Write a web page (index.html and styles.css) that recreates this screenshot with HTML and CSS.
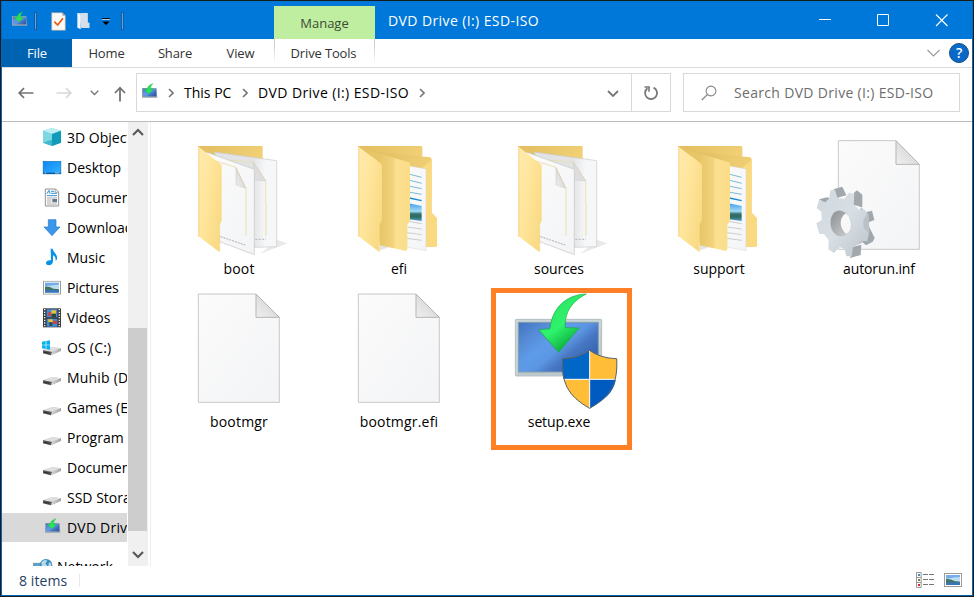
FILE: index.html
```html
<!DOCTYPE html>
<html lang="en">
<head>
<meta charset="utf-8">
<title>DVD Drive (I:) ESD-ISO</title>
<link rel="stylesheet" href="styles.css">
</head>
<body>
<svg class="defs" width="0" height="0" aria-hidden="true">
  <defs>
    <linearGradient id="gBack" x1="0" y1="0" x2="1" y2="1"><stop offset="0" stop-color="#e3bd5f"/><stop offset="1" stop-color="#fbdf88"/></linearGradient>
    <linearGradient id="gFront" x1="0" y1="0" x2="1" y2="0.6"><stop offset="0" stop-color="#ffebb0"/><stop offset="0.5" stop-color="#ffe59b"/><stop offset="1" stop-color="#f9db85"/></linearGradient>
    <linearGradient id="gMid" x1="0" y1="0" x2="1" y2="0"><stop offset="0.25" stop-color="#e7c668"/><stop offset="0.6" stop-color="#f2d47b"/><stop offset="0.64" stop-color="#fbe092"/><stop offset="1" stop-color="#fbdd87"/></linearGradient>
    <linearGradient id="gPaper" x1="0" y1="0" x2="1" y2="1"><stop offset="0" stop-color="#fbfbfb"/><stop offset="1" stop-color="#f3f4f6"/></linearGradient>
    <linearGradient id="gPaper2" x1="0" y1="0" x2="1" y2="0"><stop offset="0.62" stop-color="#e1e3e4"/><stop offset="0.82" stop-color="#f6f7f8"/></linearGradient>
    <linearGradient id="gFold" x1="0" y1="1" x2="1" y2="0"><stop offset="0" stop-color="#f0f0f0"/><stop offset="0.5" stop-color="#dedede"/><stop offset="1" stop-color="#d0d0d0"/></linearGradient>
    <linearGradient id="gPhoto" x1="0" y1="0" x2="0" y2="1"><stop offset="0" stop-color="#3f9ce8"/><stop offset="0.45" stop-color="#a5dcf7"/><stop offset="0.6" stop-color="#356f70"/><stop offset="0.78" stop-color="#2d6d62"/><stop offset="1" stop-color="#4f9fd0"/></linearGradient>
    <linearGradient id="gScreen" x1="0" y1="0" x2="1" y2="0.75"><stop offset="0" stop-color="#3f72c0"/><stop offset="0.2" stop-color="#5488d3"/><stop offset="0.42" stop-color="#5d9be8"/><stop offset="0.58" stop-color="#5c96e3"/><stop offset="0.72" stop-color="#4777c3"/><stop offset="1" stop-color="#315da6"/></linearGradient>
    <linearGradient id="gArrow" x1="0" y1="0" x2="0.6" y2="1"><stop offset="0" stop-color="#0a9e31"/><stop offset="0.3" stop-color="#2be866"/><stop offset="0.6" stop-color="#2ff36c"/><stop offset="1" stop-color="#07a336"/></linearGradient>
    <linearGradient id="gGear" x1="0" y1="0" x2="1" y2="1"><stop offset="0" stop-color="#d0d7dd"/><stop offset="0.5" stop-color="#d8dfe4"/><stop offset="1" stop-color="#bcc5cc"/></linearGradient>
    <linearGradient id="gHole" x1="0" y1="0" x2="1" y2="1"><stop offset="0" stop-color="#8b8f92"/><stop offset="1" stop-color="#d0d3d5"/></linearGradient>
    <linearGradient id="gDesk" x1="0" y1="0" x2="1" y2="1"><stop offset="0" stop-color="#1185f5"/><stop offset="1" stop-color="#31b4ff"/></linearGradient>
    <linearGradient id="gDrive" x1="0" y1="0" x2="1" y2="0"><stop offset="0" stop-color="#d9d9da"/><stop offset="1" stop-color="#a3a3a5"/></linearGradient>

    <symbol id="folder-papers" viewBox="-3 24 360 360">
      <path d="M240 372L322 340L292 330Z" fill="#e9e9e9"/>
      <path d="M54 48H245Q248 48 248 52V200H54Z" fill="url(#gBack)"/>
      <path d="M102 66L290 92V350L225 352Z" fill="url(#gPaper2)" stroke="#c9c9c9" stroke-width="2"/>
      <path d="M140 90L220 97L257 153V222" fill="none" stroke="#eddfb4" stroke-width="3"/>
      <path d="M258 222V318" stroke="#efe3bb" stroke-width="4"/>
      <path d="M220 97L257 153L222 149Z" fill="#dedede" stroke="#b9b9b9"/>
      <path d="M226 328H258" stroke="#999" stroke-width="2" stroke-dasharray="6 4"/>
      <path d="M78 66L223 118V374L119 335Z" fill="url(#gPaper)" stroke="#c4c4c4" stroke-width="2"/>
      <path d="M110 94L168 112L198 175V318" fill="none" stroke="#eddfb4" stroke-width="3"/>
      <path d="M168 114L197 175L168 164Z" fill="url(#gFold)" stroke="#b4b4b4"/>
      <path d="M122 320L198 346" stroke="#888" stroke-width="2" stroke-dasharray="6 3"/>
      <path d="M54 49L125 105V272L119 285V367L54 318Z" fill="url(#gFront)"/>
      <path d="M57 53V319M119 286V365" stroke="#edcf7d" stroke-width="2" opacity=".7"/>
    </symbol>

    <symbol id="folder-docs" viewBox="-3 24 360 360">
      <path d="M119 362L145 352L119 342Z" fill="#e4e4e4"/>
      <path d="M54 48H243Q247 48 247 52V200H54Z" fill="url(#gBack)"/>
      <path d="M88 62L270 82Q275 83 275 88V248L291 265V346Q291 351 286 351H240L100 300Z" fill="url(#gBack)"/>
      <path d="M250 110L275 90V248L291 265V346Q291 351 286 351H252Z" fill="#fada80"/>
      <path d="M195 106L255 116Q258 117 258 121V362L195 350Z" fill="url(#gPaper)" stroke="#d5d5d5" stroke-width="1.5"/>
      <path d="M210 133L245 142M210 151L245 160M210 169L245 176M210 187L245 193" stroke="#7bbbdc" stroke-width="3"/>
      <path d="M208 204L245 212" stroke="#188bd4" stroke-width="4"/>
      <path d="M206 220L245 228V273L206 268Z" fill="url(#gPhoto)"/>
      <path d="M206 274L245 281M202 291L245 297M200 308L245 314M200 325L245 331" stroke="#b7b7b7" stroke-width="2"/>
      <path d="M88 62L207 97Q210 98 210 103V272L202 284V356Q202 363 196 362L119 346Z" fill="url(#gMid)"/>
      <path d="M54 49L122 100Q126 104 126 110V270L119 285V367L54 318Z" fill="url(#gFront)"/>
      <path d="M57 53V319" stroke="#edcf7d" stroke-width="2" opacity=".7"/>
    </symbol>

    <symbol id="page" viewBox="-3 18 360 360">
      <path d="M55 27H227L298 97V352H55Z" fill="url(#gPaper)" stroke="#c6c8c9" stroke-width="3"/>
      <path d="M228 27L298 97H228Z" fill="url(#gFold)" stroke="#b5b5b5" stroke-width="3"/>
    </symbol>

    <symbol id="page-gear" viewBox="57 24 360 360" overflow="visible">
      <path d="M115 32H287L358 103V358H115Z" fill="url(#gPaper)" stroke="#c6c8c9" stroke-width="3"/>
      <path d="M288 32L358 103H288Z" fill="url(#gFold)" stroke="#b5b5b5" stroke-width="3"/>
      <path d="M57 208L82 202L92 206L76 220ZM102 177L127 170L139 196L111 203L88 199ZM162 188L171 181L187 194V232L160 224ZM190 248L216 242L223 270L194 281ZM184 292L206 288L224 324L218 335L198 346L180 330ZM158 351L184 344L182 375L150 384Z" fill="#a1a8ad"/>
      <path d="M182 232L206 252L208 305L184 340L168 345Z" fill="#bbc1c6"/>
      <path fill-rule="evenodd" fill="url(#gGear)" d="M91 181L105 179L112 203L133 207L147 188L163 192L160 222L177 239L195 240L201 250L190 272L191 295L207 309L202 334L182 332L168 348L158 351L156 379L139 379L134 357L119 351L102 369L85 358L86 331L72 312H58L49 280L65 270L64 245L50 235L57 210L76 217L88 205ZM123 242C88 239 82 304 114 316C160 332 167 253 123 242Z"/>
      <path fill-rule="evenodd" fill="url(#gHole)" d="M123 242C83 237 82 310 116 318C163 329 166 249 123 242ZM137 250C159 264 160 299 139 312C119 295 115 267 137 250Z"/>
    </symbol>

    <symbol id="installer" viewBox="57 33 360 360">
      <rect x="106" y="118" width="259" height="170" rx="3" fill="#cbd6da" stroke="#9eabb0" stroke-width="2"/>
      <path d="M108 286L117 276H355L363 120V286Z" fill="#acbabf" opacity=".5"/>
      <rect x="115" y="127" width="240" height="149" fill="url(#gScreen)" stroke="#879dab" stroke-width="3"/>
      <path d="M319 42C273 43 218 70 210 146L176 149L236 217L297 144L256 143C253 94 279 62 319 42Z" fill="url(#gArrow)" stroke="#16a840" stroke-width="2"/>
      <path d="M329 211C348 225 375 235 410 236C414 307 395 347 329 385C262 347 244 307 248 236C283 235 310 225 329 211Z" fill="#ffbd38"/>
      <path d="M329 211V298H250C247 280 247 260 248 236C283 235 310 225 329 211Z" fill="#0067c7"/>
      <path d="M329 298H408C401 338 373 361 329 385Z" fill="#005bc0"/>
      <path d="M329 213V384M249 298H409" stroke="#fff" stroke-width="3"/>
      <path d="M329 211C348 225 375 235 410 236C414 307 395 347 329 385C262 347 244 307 248 236C283 235 310 225 329 211Z" fill="none" stroke="#57616a" stroke-width="3"/>
    </symbol>

    <symbol id="dvd" viewBox="33 32 51 48">
      <path d="M36 47H79L82 76H36Z" fill="#93a2ac"/>
      <rect x="39" y="49" width="40" height="23" fill="url(#gScreen)"/>
      <path d="M69 34C57 37 52 44 52 51H43L57 65L70 51H62C61 43 65 38 69 34Z" fill="#27e553" stroke="#0cae36"/>
    </symbol>

    <symbol id="drive" viewBox="0 0 60 60">
      <path d="M3 37L31 28L57 31V38L27 52L3 46Z" fill="#aeaeb0"/>
      <path d="M3 37L31 27L57 31L30 42Z" fill="#dededf"/>
      <path d="M3 37L30 42L27 52L3 46Z" fill="#555859"/>
      <path d="M6 41L22 44V47L6 44Z" fill="#272f2b"/>
      <path d="M30 42L57 31V38L27 52Z" fill="url(#gDrive)"/>
    </symbol>

    <symbol id="photo" viewBox="0 0 54 42">
      <rect x="1.5" y="1.5" width="51" height="39" fill="#fff" stroke="#9b9b9b" stroke-width="3"/>
      <rect x="6" y="6" width="42" height="30" fill="#b9dcf3"/>
      <path d="M6 6H48V12Q30 12 6 17Z" fill="#76ace8"/>
      <path d="M6 18Q20 17 31 24L48 26V30H6Z" fill="#427461"/>
      <path d="M6 28H48V36H6Z" fill="#3976b8"/>
    </symbol>
    <symbol id="chev" viewBox="0 0 12 8"><path d="M1 1L6 6L11 1" fill="none" stroke="currentColor" stroke-width="1.8"/></symbol>
    <symbol id="chev-right" viewBox="0 0 6 10"><path d="M1 1L5 5L1 9" fill="none" stroke="#777" stroke-width="1.6"/></symbol>
  </defs>
</svg>

<div class="window">
  <header class="titlebar">
    <div class="quick">
      <svg class="q-app" width="17" height="16"><use href="#dvd"/></svg>
      <span class="q-sep"></span>
      <svg class="q-check" width="15" height="19" viewBox="0 0 45 57"><path d="M2 2H34L43 11V55H2Z" fill="#fafafa" stroke="#a5a09b" stroke-width="2"/><path d="M34 2V11H43Z" fill="#aaa"/><path d="M10 29L20 39L36 19" fill="none" stroke="#e8590c" stroke-width="5"/></svg>
      <svg class="q-folder" width="13" height="18" viewBox="0 0 39 54"><path d="M3 3H32V32H37V48H14Z" fill="#c3cfe0"/><path d="M1 2L11 8V52L1 47Z" fill="#f2f5fa"/><path d="M11 8L14 3H32V32H37V47H11Z" fill="#d5deeb"/></svg>
      <svg class="q-caret" width="8" height="8" viewBox="0 0 8 8"><path d="M0 .5H8" stroke="#111"/><path d="M0 1.5H8" stroke="#9cc9f0"/><path d="M.5 3.5H7.5L4 7.2Z" fill="#000"/></svg>
      <span class="q-sep last"></span>
    </div>
    <div class="context">Manage</div>
    <div class="title">DVD Drive (I:) ESD-ISO</div>
    <div class="controls">
      <svg viewBox="0 0 58 38"><path d="M23 18.5H35" stroke="#fff"/></svg>
      <svg viewBox="0 0 58 38"><path d="M23.5 13.5H34.5V24.5H23.5Z" fill="none" stroke="#fff"/></svg>
      <svg viewBox="0 0 58 38"><path d="M24 13.5L35.5 25M35.5 13.5L24 25" stroke="#fff" stroke-width="1.1"/></svg>
    </div>
  </header>

  <nav class="ribbon">
    <span class="tab file">File</span>
    <span class="tab home">Home</span>
    <span class="tab share">Share</span>
    <span class="tab view">View</span>
    <span class="tab tools">Drive Tools</span>
    <span class="ribbon-end">
      <svg width="13" height="8" viewBox="0 0 13 8"><path d="M.5 1L6.5 7L12.5 1" fill="none" stroke="#999" stroke-width="1.1"/></svg>
      <span class="help">?</span>
    </span>
  </nav>

  <div class="navrow">
    <div class="arrows">
      <svg width="16" height="12" viewBox="0 0 16 12"><path d="M15.5 6H1.5M6 1.2L1.2 6L6 10.8" fill="none" stroke="#737373" stroke-width="1.7"/></svg>
      <svg class="fwd" width="16" height="12" viewBox="0 0 16 12"><path d="M.5 6H14.5M10 1.2L14.8 6L10 10.8" fill="none" stroke="#d8d8d8" stroke-width="1.7"/></svg>
      <svg class="hist" width="9" height="6"><use href="#chev"/></svg>
      <svg class="up" width="12" height="16" viewBox="0 0 12 16"><path d="M6 15.5V1.5M1 7L6 1.7L11 7" fill="none" stroke="#737373" stroke-width="1.8"/></svg>
    </div>
    <div class="address">
      <svg class="a-icon" width="17" height="16"><use href="#dvd"/></svg>
      <svg class="a-chev" width="6" height="10"><use href="#chev-right"/></svg>
      <span class="crumb pc">This PC</span>
      <svg class="a-chev" width="6" height="10"><use href="#chev-right"/></svg>
      <span class="crumb disc">DVD Drive (I:) ESD-ISO</span>
      <svg class="a-chev" width="6" height="10"><use href="#chev-right"/></svg>
      <svg class="a-drop" width="12" height="8"><use href="#chev"/></svg>
      <span class="refresh"><svg width="16" height="16" viewBox="0 0 16 16"><path d="M10.6 2.6A6 6 0 1 1 4.5 3.2" fill="none" stroke="#777" stroke-width="1.8"/><path d="M1.5 2H6V6.7" fill="none" stroke="#777" stroke-width="1.6"/></svg></span>
    </div>
    <div class="search">
      <svg width="16" height="16" viewBox="0 0 16 16"><circle cx="10" cy="6" r="4.9" fill="none" stroke="#858585" stroke-width="1.1"/><path d="M6.5 9.5L.8 15" stroke="#858585" stroke-width="1.2"/></svg>
      <span>Search DVD Drive (I:) ESD-ISO</span>
    </div>
  </div>

  <main class="content">
    <aside class="tree">
      <div class="node"><svg width="20" height="20" viewBox="126 24 60 60"><path d="M129 32L156 24L183 32V68L156 78L129 68Z" fill="#64cbd9"/><path d="M129 32L156 24L183 32L156 42Z" fill="#bdeff3"/><path d="M156 42L183 32V68L156 78Z" fill="#119bbb"/><path d="M129 32L156 42V60L129 68Z" fill="#7bd7e2"/><path d="M129 68L156 59V78Z" fill="#42b8cd"/></svg><span>3D Objects</span></div>
      <div class="node"><svg width="20" height="20" viewBox="126 113 60 60"><rect x="129.5" y="123.500" width="53" height="37" fill="url(#gDesk)" stroke="#0670b9" stroke-width="2"/><path d="M130 159H182" stroke="#045695" stroke-width="4"/><path d="M134 158H139M165 158H178" stroke="#fff" stroke-width="2"/></svg><span>Desktop</span></div>
      <div class="node"><svg width="20" height="20" viewBox="126 203 60 60"><path d="M136 206H167L176 215V257H136Z" fill="#fbfbfb" stroke="#929292" stroke-width="3"/><path d="M166 206V216H176" fill="none" stroke="#929292" stroke-width="2"/><path d="M141 220L147 210L150 220M153 213H163M153 219H171M141 226H171" fill="none" stroke="#3493d6" stroke-width="3"/><path d="M141 233H171M141 239H154M141 245H154M141 251H171" stroke="#888" stroke-width="2"/><rect x="157" y="236" width="14" height="10" fill="#61798a"/></svg><span>Documents</span></div>
      <div class="node"><svg width="20" height="20" viewBox="126 293 60 60"><path d="M145 298H168V320H180L156 346L132 320H145Z" fill="#3a97e9" stroke="#2676c5" stroke-width="2"/></svg><span>Downloads</span></div>
      <div class="node"><svg width="20" height="20" viewBox="126 383 60 60"><path d="M152 385H158C159 396 173 400 171 417L167 422C168 411 163 407 159 405V423C159 437 138 438 138 428C138 421 146 418 153 420Z" fill="#0993e6"/></svg><span>Music</span></div>
      <div class="node"><svg width="20" height="20" viewBox="-3 -8 60 60"><use href="#photo" width="54" height="42"/></svg><span class="tight">Pictures</span></div>
      <div class="node"><svg width="20" height="20" viewBox="126 560 60 60"><rect x="129" y="561" width="54" height="57" fill="#3d3b3c"/><path d="M134 563V618M178 563V618" stroke="#eee" stroke-width="4" stroke-dasharray="4 4"/><path d="M140 564H172V588H140ZM140 592H172V616H140Z" fill="#4289d8"/><path d="M145 573H154V584H145ZM159 598H170V608H159Z" fill="#d83e3b"/><path d="M154 567H168V577H154ZM145 594H158V602H145Z" fill="#edc332"/><path d="M155 577H168V588H155ZM148 603H157V613H148Z" fill="#284a3c"/></svg><span>Videos</span></div>
      <div class="node"><svg width="20" height="20" viewBox="0 0 60 60"><use href="#drive" width="60" height="60"/><path d="M0 11L11 9V20H0ZM13 9L24 7V20H13ZM0 22H11V33L0 31ZM13 22H24V35L13 33Z" fill="#05b2ee"/></svg><span class="wide">OS (C:)</span></div>
      <div class="node"><svg width="20" height="20"><use href="#drive"/></svg><span class="wide">Muhib (D:)</span></div>
      <div class="node"><svg width="20" height="20"><use href="#drive"/></svg><span>Games (E:)</span></div>
      <div class="node"><svg width="20" height="20"><use href="#drive"/></svg><span>Program Files</span></div>
      <div class="node"><svg width="20" height="20"><use href="#drive"/></svg><span>Documents</span></div>
      <div class="node"><svg width="20" height="20"><use href="#drive"/></svg><span>SSD Storage</span></div>
      <div class="node selected"><svg class="dvd" width="17" height="16"><use href="#dvd"/></svg><span class="wide">DVD Drive (I:)</span></div>
      <div class="node network"><svg width="20" height="20" viewBox="0 0 60 60"><rect x="2" y="19" width="31" height="23" fill="#54a1d5" stroke="#7894a4" stroke-width="3"/><circle cx="39" cy="25" r="19" fill="#3a8ac1"/><path d="M25 16Q34 5 43 11L37 20L43 25L35 32L26 26ZM48 15L56 21L52 32L46 26Z" fill="#b4dbe6"/></svg><span>Network</span></div>
    </aside>
    <div class="scroll">
      <svg class="s-arrow" width="12" height="8" viewBox="0 0 12 8"><path d="M1 7L6 2L11 7" fill="none" stroke="#555" stroke-width="2"/></svg>
      <div class="thumb"></div>
      <svg class="s-arrow" width="12" height="8" viewBox="0 0 12 8"><path d="M1 1L6 6L11 1" fill="none" stroke="#555" stroke-width="2"/></svg>
    </div>
    <section class="files">
      <div class="item"><svg><use href="#folder-papers"/></svg><span class="loose">boot</span></div>
      <div class="item"><svg><use href="#folder-docs"/></svg><span>efi</span></div>
      <div class="item"><svg><use href="#folder-papers"/></svg><span class="tight">sources</span></div>
      <div class="item"><svg><use href="#folder-docs"/></svg><span>support</span></div>
      <div class="item"><svg><use href="#page-gear"/></svg><span class="tight">autorun.inf</span></div>
      <div class="item"><svg><use href="#page"/></svg><span class="loose">bootmgr</span></div>
      <div class="item"><svg><use href="#page"/></svg><span class="loose">bootmgr.efi</span></div>
      <div class="item marked"><svg><use href="#installer"/></svg><span class="tight">setup.exe</span></div>
    </section>
  </main>

  <footer class="status">
    <span class="count">8 items</span>
    <span class="s-sep"></span>
    <svg class="v-list" width="18" height="16" viewBox="0 0 54 48"><path d="M1.500 1.500H15.500V46.500H1.500ZM1.500 16.500H15.500M1.500 31.500H15.500" fill="#fff" stroke="#999" stroke-width="3"/><path d="M6 9H12" stroke="#3d8ac5" stroke-width="6"/><path d="M6 24H12" stroke="#777b42" stroke-width="6"/><path d="M6 39H12" stroke="#d3291c" stroke-width="6"/><path d="M21 7.500H36M39 7.500H54M21 22.500H36M39 22.500H54M21 37.500H36M39 37.500H54" stroke="#777" stroke-width="3"/></svg>
    <svg width="18" height="14"><use href="#photo"/></svg>
  </footer>
</div>
</body>
</html>
```
FILE: styles.css
```css
*, *::before, *::after { box-sizing: border-box; }
body {
  margin: 0;
  width: 974px;
  height: 597px;
  overflow: hidden;
  background: #1b1b1b;
  font-family: "Open Sans", "Noto Sans", sans-serif;
  font-size: 14px;
  font-variant-ligatures: none;
  color: #000;
}
svg { display: block; flex: none; }
.defs { position: absolute; }
.window {
  display: flex;
  flex-direction: column;
  width: 972px;
  height: 595px;
  margin: 1px;
  border: 1px solid #0067b8;
  border-top: 0;
  background: #fff;
}
.titlebar { display: flex; height: 38px; background: #0078d9; color: #fff; flex: none; }
.quick { display: flex; align-items: center; width: 272px; padding-left: 9px; }
.q-app { margin-top: -3px; }
.q-sep { width: 3px; height: 18px; margin: 1px 14px 0 6px; border: 1px solid #1c5c9c; background: #55a5e7; }
.q-sep.last { margin: 1px 0 0 11px; }
.q-check { margin-right: 11px; margin-top: 2px; }
.q-folder { margin-right: 12px; margin-top: 2px; }
.q-caret { margin-top: 4px; }
.context {
  width: 101px;
  height: 33px;
  align-self: flex-end;
  background: #c0eea0;
  color: #3c4a35;
  font-size: 13px;
  line-height: 35px;
  text-align: center;
}
.title { padding-left: 13px; line-height: 40px; letter-spacing: .4px; white-space: nowrap; }
.controls { display: flex; margin-left: auto; margin-right: 2px; }
.controls svg { width: 58px; height: 38px; }

.ribbon { display: flex; height: 29px; flex: none; border-bottom: 1px solid #d9dbdc; font-size: 13px; letter-spacing: -.15px; color: #333; }
.tab { height: 28px; line-height: 28px; text-align: center; }
.file { width: 70px; background: #0063b1; color: #fff; }
.home { width: 69px; }
.share { width: 68px; }
.view { width: 65px; padding-right: 2px; }
.tools {
  width: 101px;
  padding-right: 2px;
  border: 1px solid;
  border-width: 0 1px;
  border-image: linear-gradient(#ccc 20%, #fff 85%) 1;
}
.ribbon-end { display: flex; align-items: center; gap: 9px; margin-left: auto; padding-right: 3px; }
.help {
  width: 20px;
  height: 20px;
  border: 1px solid #174f86;
  border-radius: 50%;
  background: #0869c9;
  color: #fff;
  font-size: 14px;
  font-weight: 600;
  line-height: 18px;
  text-align: center;
}

.navrow { display: flex; height: 54px; flex: none; align-items: flex-start; padding-top: 5px; border-bottom: 1px solid #bcbcbc; }
.arrows { display: flex; align-items: center; width: 134px; height: 40px; padding-left: 16px; color: #777; }
.fwd { margin-left: 22px; }
.hist { margin-left: 18px; }
.up { margin-left: 15px; margin-top: 2px; }
.address { display: flex; align-items: center; width: 535px; height: 39px; border: 1px solid #d9d9d9; padding-left: 4px; }
.a-icon { margin-top: -4px; }
.a-chev { margin-left: 10px; }
.crumb { white-space: nowrap; line-height: 37px; }
.pc { width: 48px; margin-left: 10px; }
.disc { width: 151px; margin-left: 10px; letter-spacing: .4px; }
.a-drop { margin-left: auto; color: #777; margin-right: 12px; margin-top: 2px; }
.refresh { display: flex; align-items: center; justify-content: center; width: 39px; height: 37px; border-left: 1px solid #d9d9d9; }
.search {
  display: flex;
  align-items: center;
  width: 277px;
  height: 39px;
  margin-left: 12px;
  padding-left: 17px;
  gap: 17px;
  border: 1px solid #d9d9d9;
  color: #6d6d6d;
  letter-spacing: .32px;
  white-space: nowrap;
}

.content { display: flex; height: 444px; flex: none; }
.tree { width: 125px; height: 444px; overflow: hidden; padding-top: 1px; flex: none; }
.node { display: flex; align-items: center; height: 30px; padding-left: 40px; gap: 5px; white-space: nowrap; line-height: 30px; }
.node:nth-child(14) { height: 29px; }
.wide { letter-spacing: .2px; }
.selected { background: #d9d9d9; padding-left: 42px; gap: 6px; }
.dvd { margin-top: -3px; }
.network { margin-top: 10px; padding-left: 31px; gap: 4px; }
.scroll { display: flex; flex-direction: column; align-items: center; width: 20px; height: 444px; margin-left: 1px; padding: 6px 1px 7px 0; background: #f0f0f0; flex: none; }
.thumb { width: 19px; height: 203px; margin-top: auto; background: #cdcdcd; }
.scroll .s-arrow:last-child { margin-top: 20px; }
.files {
  display: grid;
  grid-template-columns: repeat(5, 160px);
  grid-auto-rows: 142px;
  row-gap: 11px;
  align-content: start;
  margin-left: 2px;
  padding: 16px 0 0 8px;
  width: 821px;
  border-left: 1px solid #ededed;
}
.item { position: relative; display: flex; flex-direction: column; align-items: center; }
.item svg { width: 120px; height: 120px; overflow: visible; }
.item span { height: 22px; line-height: 22px; }
.tight { letter-spacing: -.12px; }
.loose { letter-spacing: .2px; }
.marked::after {
  content: "";
  position: absolute;
  left: 12px;
  top: -3px;
  width: 141px;
  height: 162px;
  border: 5px solid #ff7f27;
}

.status { display: flex; align-items: center; height: 28px; flex: none; padding: 0 10px 0 17px; color: #25425f; }
.count { letter-spacing: .1px; }
.s-sep { width: 1px; height: 13px; margin-left: 12px; background: #e8e8e8; }
.v-list { margin-left: auto; margin-right: 10px; }
```
